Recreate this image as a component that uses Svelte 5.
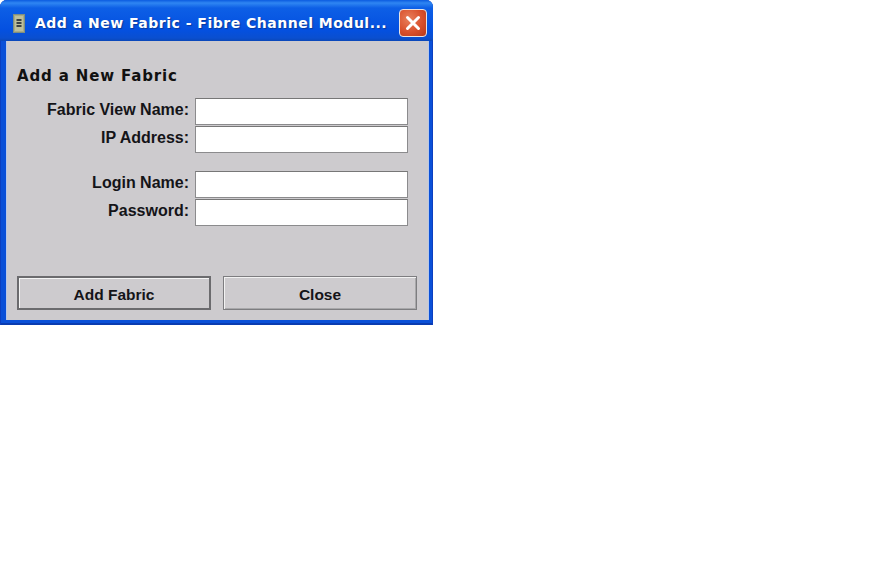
<script>
  let groups = [
    ["Fabric View Name:", "IP Address:"],
    ["Login Name:", "Password:"],
  ];
</script>

<div class="window">
  <header class="titlebar">
    <svg class="app-icon" width="12" height="19" viewBox="0 0 12 19">
      <rect x="0.5" y="0.5" width="11" height="18" fill="#a9ab86" stroke="#7f8f80" />
      <rect x="2" y="2" width="8" height="15" fill="#bdbf9c" />
      <rect x="3.5" y="5" width="5" height="2" fill="#3c4244" />
      <rect x="3.5" y="8" width="5" height="2" fill="#3c4244" />
      <rect x="3.5" y="11" width="5" height="2" fill="#3c4244" />
    </svg>
    <span class="title">Add a New Fabric - Fibre Channel Modul...</span>
    <button class="close-x" aria-label="Close window">
      <svg width="26" height="26" viewBox="0 0 26 26">
        <path d="M7.5 7.5 L18.5 18.5 M18.5 7.5 L7.5 18.5" stroke="#fff" stroke-width="3" stroke-linecap="round" />
      </svg>
    </button>
  </header>

  <main class="client">
    <h1>Add a New Fabric</h1>
    <div class="groups">
      {#each groups as group}
        <div class="group">
          {#each group as label}
            <label class="row">
              <span>{label}</span>
              <input type="text" />
            </label>
          {/each}
        </div>
      {/each}
    </div>
    <div class="actions">
      <button class="btn default">Add Fabric</button>
      <button class="btn">Close</button>
    </div>
  </main>
</div>

<style>
  :global(body) {
    margin: 0;
    background: #fff;
  }

  .window {
    width: 433px;
    height: 325px;
    box-sizing: border-box;
    display: flex;
    flex-direction: column;
    background: #0a50d8;
    border-radius: 7px 7px 0 0;
    padding: 0 4px 5px 6px;
    box-shadow: inset 1px 0 0 #0b3fc0, inset -1px 0 0 #0b3fc0, inset 0 -2px 0 #0a3cb0;
    font-family: "Liberation Sans", Arial, sans-serif;
  }

  .titlebar {
    height: 41px;
    box-sizing: border-box;
    flex-shrink: 0;
    display: flex;
    align-items: center;
    margin: 0 -4px 0 -6px;
    padding: 5px 6px 0 13px;
    border-radius: 7px 7px 0 0;
    background: linear-gradient(#0b5be0 0, #2f86f2 3px, #0d5fe6 8px, #0450e0 30px, #0a4fd0 38px, #0a47b8 41px);
  }

  .app-icon {
    flex-shrink: 0;
    margin-right: 10px;
  }

  .title {
    flex: 1;
    color: #fff;
    font-family: "DejaVu Sans", sans-serif;
    font-size: 14px;
    font-weight: 700;
    letter-spacing: 0.5px;
    white-space: nowrap;
    text-shadow: 1px 1px 1px #0a3a9c;
  }

  .close-x {
    width: 28px;
    height: 28px;
    padding: 0;
    box-sizing: border-box;
    display: flex;
    align-items: center;
    justify-content: center;
    border: 1px solid #e8e4e4;
    border-radius: 4px;
    background: radial-gradient(circle at 35% 35%, #e8805c, #d9502c 55%, #b83818);
  }

  .client {
    flex: 1;
    display: flex;
    flex-direction: column;
    background: #cdcbce;
    box-shadow: inset 1px 0 0 #b8c8e8, inset -1px 0 0 #b8c8e8;
    padding: 0 12px 10px 11px;
    min-height: 0;
  }

  h1 {
    margin: 26px 0 0;
    font-family: "DejaVu Sans", sans-serif;
    font-size: 15px;
    line-height: 19px;
    font-weight: 700;
    letter-spacing: 0.85px;
    color: #111;
  }

  .groups {
    margin-top: 12px;
    display: flex;
    flex-direction: column;
    gap: 18px;
  }

  .group {
    display: flex;
    flex-direction: column;
    gap: 1px;
  }

  .row {
    display: flex;
    align-items: center;
    justify-content: flex-end;
    gap: 6px;
    padding-right: 9px;
    font-size: 16px;
    font-weight: 700;
    color: #141418;
  }

  .row span {
    margin-top: -4px;
  }

  .row input {
    width: 213px;
    height: 27px;
    box-sizing: border-box;
    margin: 0;
    padding: 0 4px;
    background: #fff;
    border: 1px solid #8b8b8d;
    border-top-color: #777;
    border-radius: 0;
    outline: none;
  }

  .actions {
    margin-top: auto;
    display: flex;
    gap: 12px;
  }

  .btn {
    width: 194px;
    height: 34px;
    box-sizing: border-box;
    padding: 3px 0 0;
    font-family: inherit;
    font-size: 15.5px;
    font-weight: 700;
    color: #141418;
    background: #cdcbce;
    border: 1px solid #7d7d80;
    box-shadow: inset 1px 1px 0 #f2f2f2, inset -1px -1px 0 #a8a8aa;
    border-radius: 0;
  }

  .btn.default {
    border: 2px solid #6b6b6e;
    box-shadow: inset 1px 1px 0 #f4f4f4;
  }
</style>
